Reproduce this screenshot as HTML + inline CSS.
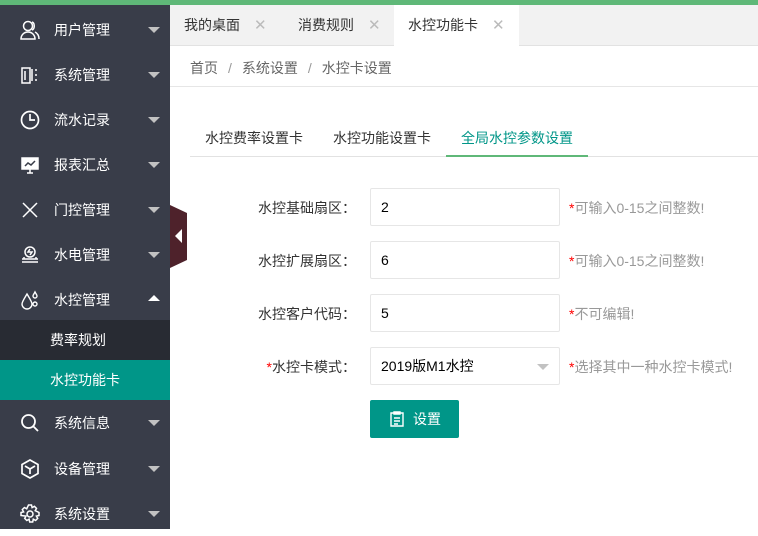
<!DOCTYPE html>
<html><head><meta charset="utf-8"><style>
*{margin:0;padding:0;box-sizing:border-box}
body{width:758px;height:529px;overflow:hidden;background:#fff;font-family:"Liberation Sans","Noto Sans CJK SC",sans-serif;font-size:14px;color:#333;position:relative}
.top{position:absolute;left:0;top:0;width:758px;height:5px;background:#5fb878}
.side{position:absolute;left:0;top:5px;width:170px;height:524px;background:#393d49}
.it{position:absolute;left:0;width:170px;height:45px;color:#fff;font-size:14px}
.it .ic{position:absolute;left:20px;top:13px;width:20px;height:20px}
.it .t{position:absolute;left:54px;top:13px;line-height:20px}
.it .ar{position:absolute;left:148px;top:20px;width:0;height:0;border-left:6px solid transparent;border-right:6px solid transparent;border-top:6px solid #c2c2c2}
.it .ar.up{border-top:none;border-bottom:6px solid #fff;top:18px}
.sub{position:absolute;left:0;width:170px;height:40px;line-height:40px;padding-left:50px;color:#fff;font-size:14px}
.tabs{position:absolute;left:170px;top:5px;width:588px;height:41px;background:#f2f2f2;border-bottom:1px solid #e2e2e2}
.tab{position:absolute;top:0;height:41px;line-height:41px;color:#333;font-size:14px}
.tab .x{color:#bbb;margin-left:14px;font-size:15px}
.tab.on{background:#fff;height:42px}
.bc{position:absolute;left:190px;top:58px;color:#666;font-size:14px}
.bc span{color:#999;margin:0 10px}
.hline{position:absolute;left:170px;top:86px;width:588px;height:1px;background:#e6e6e6}
.tline{position:absolute;left:190px;top:156px;width:568px;height:1px;background:#e2e2e2}
.tact{position:absolute;left:446px;top:155px;width:142px;height:2px;background:#5fb878}
.th{position:absolute;top:128px;font-size:14px;color:#333}
.lab{position:absolute;width:180px;left:176px;text-align:right;color:#333;font-size:14px}
.inp{position:absolute;left:370px;width:190px;height:38px;border:1px solid #e6e6e6;border-radius:2px;padding-left:10px;line-height:36px;color:#000;font-size:14px}
.hint{position:absolute;left:569px;color:#999;font-size:14px}
.r{color:#f00}
.btn{position:absolute;left:370px;top:400px;width:89px;height:38px;background:#009688;border-radius:2px;color:#fff;line-height:38px;font-size:14px}
</style></head><body>
<div class="top"></div>
<div class="side">
 <div class="it" style="top:2px"><svg class="ic" viewBox="0 0 20 20" fill="none" stroke="#fff" stroke-width="1.5"><circle cx="8" cy="6" r="4.5"/><path d="M1 19c0-4 3-7 7-7s7 3 7 7zM12 2c3 1 3 7 0 8M15 12c2 1 4 3 4 7"/></svg><span class="t">用户管理</span><i class="ar"></i></div>
 <div class="it" style="top:47px"><svg class="ic" viewBox="0 0 20 20" fill="none" stroke="#fff" stroke-width="1.5"><path d="M2 3h8v15H2zM5 6v9M12 4v12M16 4v2M16 9v2M16 14v2"/></svg><span class="t">系统管理</span><i class="ar"></i></div>
 <div class="it" style="top:92px"><svg class="ic" viewBox="0 0 20 20" fill="none" stroke="#fff" stroke-width="1.7"><circle cx="10" cy="10" r="8.5"/><path d="M10 4v6h5"/></svg><span class="t">流水记录</span><i class="ar"></i></div>
 <div class="it" style="top:137px"><svg class="ic" viewBox="0 0 20 20" fill="none" stroke="#fff" stroke-width="1.5"><rect x="2" y="3" width="16" height="11" fill="#fff"/><path d="M5 11l3-3 3 2 4-4" stroke="#393d49"/><path d="M10 14v4M7 18h6"/></svg><span class="t">报表汇总</span><i class="ar"></i></div>
 <div class="it" style="top:182px"><svg class="ic" viewBox="0 0 20 20" fill="none" stroke="#fff" stroke-width="1.5"><path d="M3 3l14 14M17 3L3 17"/></svg><span class="t">门控管理</span><i class="ar"></i></div>
 <div class="it" style="top:227px"><svg class="ic" viewBox="0 0 20 20" fill="none" stroke="#fff" stroke-width="1.5"><circle cx="10" cy="7" r="5"/><path d="M10 4l-2 3h4l-2 3M2 14h16M2 17h16M4 12v2M16 12v2"/></svg><span class="t">水电管理</span><i class="ar"></i></div>
 <div class="it" style="top:272px"><svg class="ic" viewBox="0 0 20 20" fill="none" stroke="#fff" stroke-width="1.4"><path d="M7 4c-3 5-5 8-5 10a5 5 0 0010 0c0-2-2-5-5-10zM15 2c-1 2-2 3-2 4a2 2 0 004 0c0-1-1-2-2-4z"/><circle cx="15" cy="14" r="2"/></svg><span class="t">水控管理</span><i class="ar up"></i></div>
 <div class="sub" style="top:315px;background:#282b33">费率规划</div>
 <div class="sub" style="top:355px;background:#009688">水控功能卡</div>
 <div class="it" style="top:395px"><svg class="ic" viewBox="0 0 20 20" fill="none" stroke="#fff" stroke-width="1.8"><circle cx="8.5" cy="8.5" r="6.5"/><path d="M13 13l5 5"/></svg><span class="t">系统信息</span><i class="ar"></i></div>
 <div class="it" style="top:441px"><svg class="ic" viewBox="0 0 20 20" fill="none" stroke="#fff" stroke-width="1.7"><path d="M10 1l8 4.5v9L10 19l-8-4.5v-9z"/><path d="M5 7l5 3 5-3M10 10v5"/></svg><span class="t">设备管理</span><i class="ar"></i></div>
 <div class="it" style="top:486px"><svg class="ic" viewBox="0 0 20 20" fill="none" stroke="#fff" stroke-width="1.5"><circle cx="10" cy="10" r="3"/><path d="M8.5 1h3l.6 2.6 2.3-1.3 2.1 2.1-1.3 2.3L19 8.5v3l-2.6.6 1.3 2.3-2.1 2.1-2.3-1.3-.6 2.8h-3l-.6-2.8-2.3 1.3-2.1-2.1 1.3-2.3L1 11.5v-3l2.6-.6-1.3-2.3 2.1-2.1 2.3 1.3z"/></svg><span class="t">系统设置</span><i class="ar"></i></div>
</div>
<svg style="position:absolute;left:170px;top:205px" width="18" height="63"><path d="M0 0l17 8v47L0 63z" fill="#4e222b"/><path d="M12 24v14l-7-7z" fill="#fff"/></svg>
<div class="tabs">
 <div class="tab" style="left:14px">我的桌面<span class="x">✕</span></div>
 <div class="tab" style="left:128px">消费规则<span class="x">✕</span></div>
 <div class="tab on" style="left:224px;width:125px;padding-left:14px">水控功能卡<span class="x">✕</span></div>
</div>
<div class="bc">首页<span>/</span>系统设置<span>/</span>水控卡设置</div>
<div class="hline"></div>
<div class="th" style="left:205px">水控费率设置卡</div>
<div class="th" style="left:333px">水控功能设置卡</div>
<div class="th" style="left:461px;color:#009688">全局水控参数设置</div>
<div class="tline"></div><div class="tact"></div>
<div class="lab" style="top:198px">水控基础扇区：</div>
<div class="inp" style="top:188px">2</div>
<div class="hint" style="top:198px"><span class="r">*</span>可输入0-15之间整数!</div>
<div class="lab" style="top:251px">水控扩展扇区：</div>
<div class="inp" style="top:241px">6</div>
<div class="hint" style="top:251px"><span class="r">*</span>可输入0-15之间整数!</div>
<div class="lab" style="top:304px">水控客户代码：</div>
<div class="inp" style="top:294px">5</div>
<div class="hint" style="top:304px"><span class="r">*</span>不可编辑!</div>
<div class="lab" style="top:357px"><span class="r">*</span>水控卡模式：</div>
<div class="inp" style="top:347px">2019版M1水控<i style="position:absolute;right:10px;top:16px;border-left:6px solid transparent;border-right:6px solid transparent;border-top:6px solid #c2c2c2"></i></div>
<div class="hint" style="top:357px"><span class="r">*</span>选择其中一种水控卡模式!</div>
<div class="btn"><svg style="position:absolute;left:20px;top:11px" width="14" height="16" viewBox="0 0 14 16" fill="none" stroke="#fff" stroke-width="1.4"><path d="M1 2h12v13H1zM4 1h6v2H4zM4 7h6M4 10h6M4 13h4"/></svg><span style="position:absolute;left:43px">设置</span></div>
</body></html>
